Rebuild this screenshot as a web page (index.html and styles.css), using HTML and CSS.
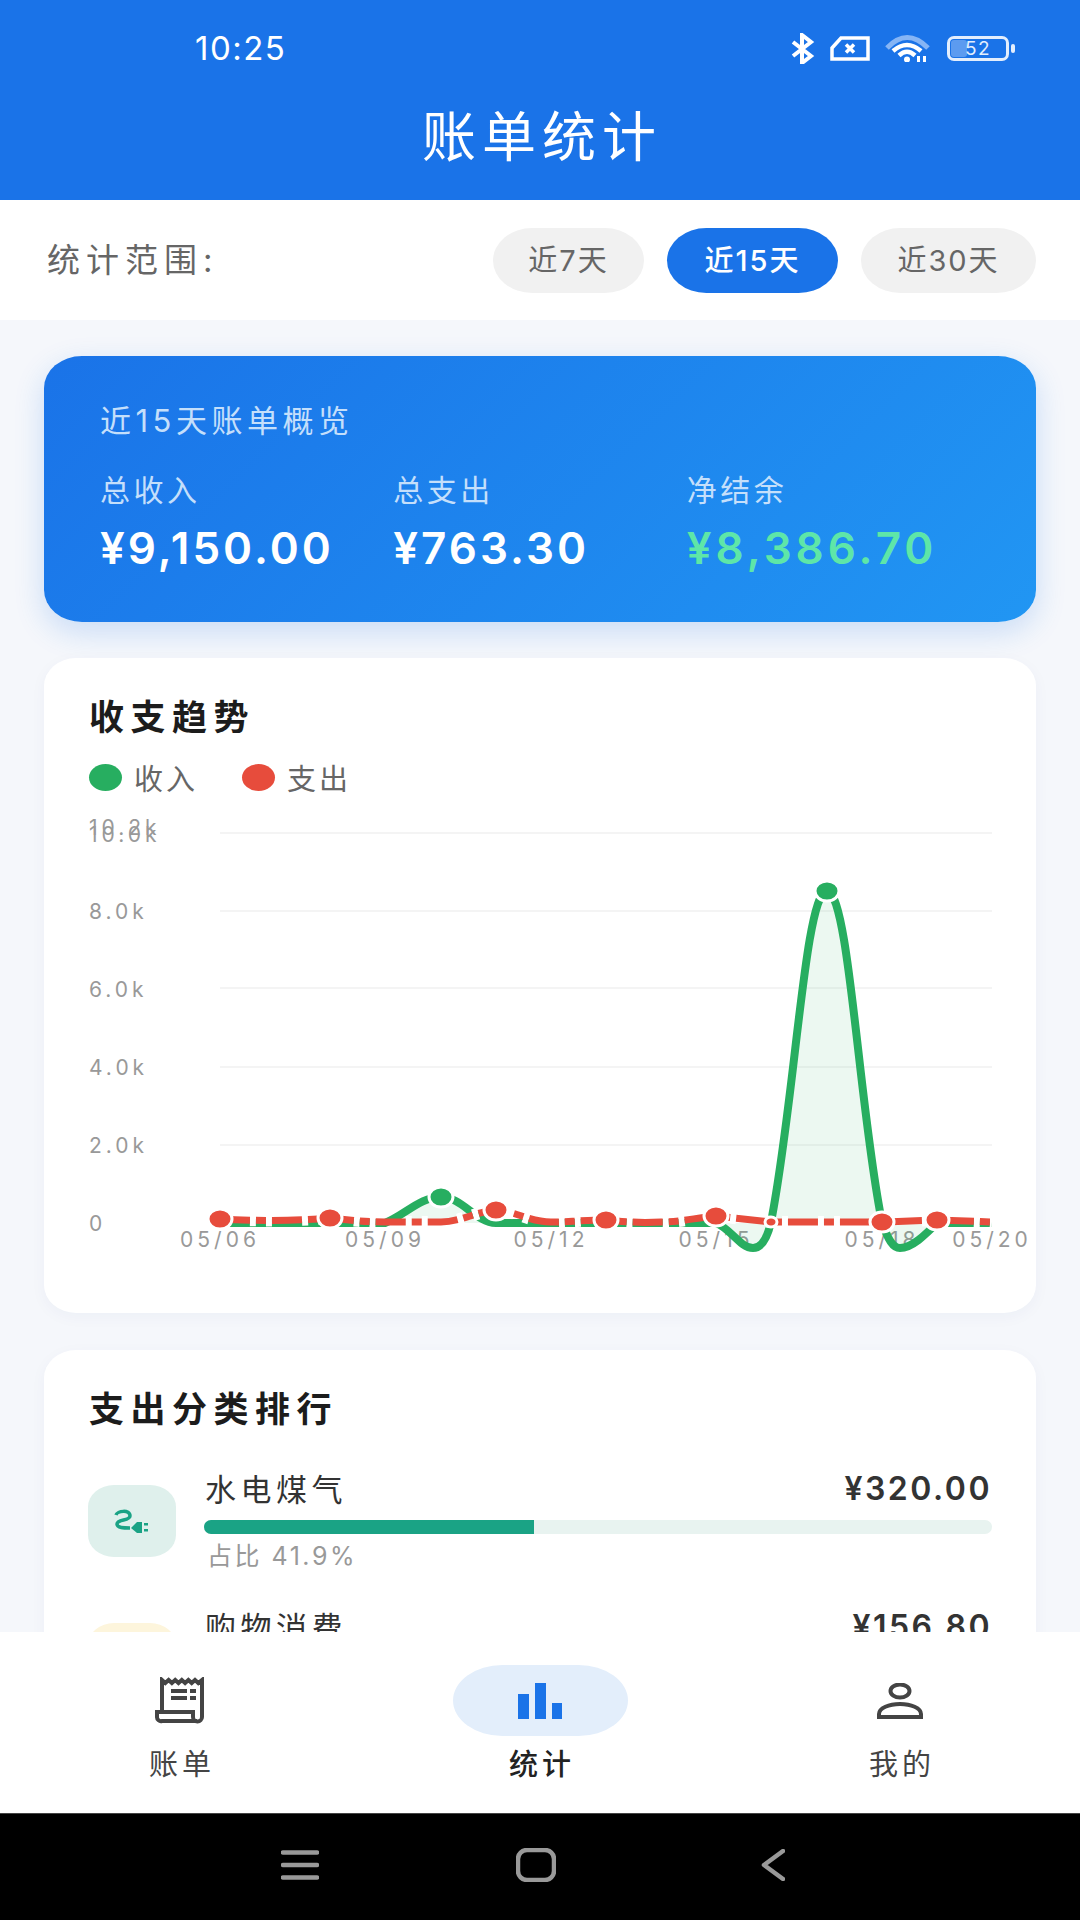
FILE: index.html
```html
<!DOCTYPE html>
<html lang="zh-CN">
<head>
    <meta charset="UTF-8">
    <meta name="viewport" content="width=device-width, initial-scale=1.0">
    <title>账单统计</title>
    <link rel="stylesheet" href="styles.css">
</head>
<body>

<header class="header">
    <div class="status-bar">
        <span class="status-time">10:25</span>
        <div class="status-icons">
            <svg class="icon-bt" viewBox="0 0 25 31"><path d="M3 9L21 23L12 30V2L21 9L3 23"/></svg>
            <svg class="icon-sim" viewBox="0 0 40 25"><path d="M2 12L11 2H38V23H2Z"/><path d="M16 8.500l8 8m0-8l-8 8"/></svg>
            <svg class="icon-wifi" viewBox="0 0 45 28">
                <path class="faded" d="M2 14Q22-7 43 14"/>
                <path d="M8 17Q22 5 36 17"/>
                <path d="M14 21.500Q22 14 30 21.500"/>
                <circle class="solid" cx="22" cy="25.500" r="3"/>
                <rect class="solid" x="32" y="22" width="3" height="6"/>
                <rect class="solid" x="38" y="22" width="3" height="6"/>
            </svg>
            <div class="battery">
                <div class="battery-body"><div class="battery-level"></div><span class="battery-text">52</span></div>
                <div class="battery-nub"></div>
            </div>
        </div>
    </div>
    <h1 class="page-title">账单统计</h1>
</header>

<div class="filter-bar">
    <span class="filter-label">统计范围:</span>
    <div class="filter-pills">
        <button class="pill pill-7">近7天</button>
        <button class="pill pill-15 active">近15天</button>
        <button class="pill pill-30">近30天</button>
    </div>
</div>

<main class="content">
    <section class="summary">
        <div class="summary-title">近15天账单概览</div>
        <div class="summary-grid">
            <div>
                <div class="summary-label">总收入</div>
                <div class="summary-value">¥9,150.00</div>
            </div>
            <div>
                <div class="summary-label">总支出</div>
                <div class="summary-value">¥763.30</div>
            </div>
            <div>
                <div class="summary-label">净结余</div>
                <div class="summary-value net">¥8,386.70</div>
            </div>
        </div>
    </section>

    <section class="card chart-card">
        <h2 class="card-title">收支趋势</h2>
        <div class="legend">
            <span class="legend-item"><i class="dot income"></i>收入</span>
            <span class="legend-item"><i class="dot expense"></i>支出</span>
        </div>
        <svg class="chart" viewBox="44 810 992 503">
            <g class="grid">
                <path d="M220 833H992"/>
                <path d="M220 911H992"/>
                <path d="M220 988H992"/>
                <path d="M220 1067H992"/>
                <path d="M220 1145H992"/>
            </g>
            <g class="y-labels">
                <text x="89" y="835">10.2k</text>
                <text x="89" y="842">10.0k</text>
                <text x="89" y="919">8.0k</text>
                <text x="89" y="997">6.0k</text>
                <text x="89" y="1075">4.0k</text>
                <text x="89" y="1153">2.0k</text>
                <text x="89" y="1231">0</text>
            </g>
            <g class="x-labels">
                <text x="220" y="1247">05/06</text>
                <text x="385" y="1247">05/09</text>
                <text x="551" y="1247">05/12</text>
                <text x="716" y="1247">05/15</text>
                <text x="882" y="1247">05/18</text>
                <text x="992" y="1247">05/20</text>
            </g>
            <path class="income-area" d="M220 1223H385C405 1215 420 1197 441 1197C462 1197 475 1222 496 1223H716C730 1228 740 1248 753 1248C763 1248 768 1235 771 1222C795 1100 805 891 827 891C849 891 859 1110 882 1222C888 1240 893 1248 900 1248C912 1248 925 1235 937 1223H992Z"/>
            <path class="income-line" d="M220 1223H385C405 1215 420 1197 441 1197C462 1197 475 1222 496 1223H716C730 1228 740 1248 753 1248C763 1248 768 1235 771 1222C795 1100 805 891 827 891C849 891 859 1110 882 1222C888 1240 893 1248 900 1248C912 1248 925 1235 937 1223H992"/>
            <!-- white goes in the gaps of the dashes so the green is cut there too -->
            <path class="expense-gaps" d="M220 1219C256 1221 294 1221 330 1218C350 1220 365 1222 385 1222H441C460 1222 475 1212 496 1210C515 1211 530 1222 551 1222C570 1222 585 1220 606 1220C625 1222 640 1223 661 1222C680 1222 695 1218 716 1216L771 1222H882L937 1220L992 1222"/>
            <path class="expense-line" d="M220 1219C256 1221 294 1221 330 1218C350 1220 365 1222 385 1222H441C460 1222 475 1212 496 1210C515 1211 530 1222 551 1222C570 1222 585 1220 606 1220C625 1222 640 1223 661 1222C680 1222 695 1218 716 1216L771 1222H882L937 1220L992 1222"/>
            <g class="income-dots">
                <ellipse cx="441" cy="1197" rx="12" ry="10"/>
                <ellipse cx="827" cy="891" rx="12" ry="10"/>
            </g>
            <g class="expense-dots">
                <ellipse cx="220" cy="1219" rx="12" ry="10"/>
                <ellipse cx="330" cy="1218" rx="12" ry="10"/>
                <ellipse cx="496" cy="1210" rx="12" ry="10"/>
                <ellipse cx="606" cy="1220" rx="12" ry="10"/>
                <ellipse cx="716" cy="1216" rx="12" ry="10"/>
                <ellipse cx="771" cy="1222" rx="6" ry="5"/>
                <ellipse cx="882" cy="1222" rx="12" ry="10"/>
                <ellipse cx="937" cy="1220" rx="12" ry="10"/>
            </g>
        </svg>
    </section>

    <section class="card rank-card">
        <h2 class="card-title">支出分类排行</h2>
        <div class="rank-item">
            <div class="rank-icon utilities">
                <svg viewBox="0 0 40 30">
                    <path class="plug-wire" d="M4 9C5 5 18 3 18 10C18 15 5 13 5 18C5 22 12 22 18 22"/>
                    <path d="M19 22L25 16H30V27H25Z"/>
                    <rect x="32" y="17" width="4" height="2.500"/>
                    <rect x="32" y="23" width="4" height="2.500"/>
                </svg>
            </div>
            <div class="rank-body">
                <div class="rank-head"><span class="rank-name">水电煤气</span><span class="rank-amount">¥320.00</span></div>
                <div class="rank-track"><div class="rank-fill" style="width: 41.9%"></div></div>
                <div class="rank-share">占比 41.9%</div>
            </div>
        </div>
        <div class="rank-item">
            <div class="rank-icon shopping"></div>
            <div class="rank-body">
                <div class="rank-head"><span class="rank-name">购物消费</span><span class="rank-amount">¥156.80</span></div>
                <div class="rank-track"><div class="rank-fill" style="width: 20.5%"></div></div>
                <div class="rank-share">占比 20.5%</div>
            </div>
        </div>
    </section>
</main>

<nav class="tabbar">
    <a class="tab">
        <span class="tab-icon">
            <svg class="icon-receipt" viewBox="0 0 52 48"><path d="M8 35V3l3.300 3 3.300-3 3.300 3 3.300-3 3.300 3 3.300-3 3.300 3 3.300-3 3.300 3 3.300-3 3.300 3L48 3v37a4 4 0 0 1-9 0v-5H3v5a4 4 0 0 0 5 4h35"/><path d="M17 14H33M36 14H42M17 21H33M36 21H42"/></svg>
        </span>
        <span class="tab-label">账单</span>
    </a>
    <a class="tab active">
        <span class="tab-icon">
            <svg class="icon-bars" viewBox="0 0 44 36"><rect x="0" y="11" width="11" height="25"/><rect x="17" y="0" width="11" height="36"/><rect x="34" y="20" width="10" height="16"/></svg>
        </span>
        <span class="tab-label">统计</span>
    </a>
    <a class="tab">
        <span class="tab-icon">
            <svg class="icon-person" viewBox="0 0 46 36"><ellipse cx="23" cy="8" rx="9.500" ry="6.500"/><path d="M2 34V31C2 25 12 21 23 21S44 25 44 31V34Z"/></svg>
        </span>
        <span class="tab-label">我的</span>
    </a>
</nav>

<div class="system-nav">
    <svg class="nav-menu" viewBox="0 0 38 30"><path d="M2 2.500H36M2 15H36M2 27.500H36"/></svg>
    <svg class="nav-home" viewBox="0 0 40 34"><rect x="2" y="2" width="36" height="30" rx="9"/></svg>
    <svg class="nav-back" viewBox="0 0 24 32"><path d="M22 2L3 16L22 30"/></svg>
</div>

</body>
</html>
```

FILE: styles.css
```css
* {
    box-sizing: border-box;
    margin: 0;
    padding: 0;
}

body {
    width: 1080px;
    height: 1920px;
    display: flex;
    flex-direction: column;
    overflow: hidden;
    font-family: Inter, "Noto Sans CJK SC", sans-serif;
    background-color: #f5f7fb;
}

/* header */
.header {
    height: 200px;
    flex-shrink: 0;
    background-color: #1a73e8;
    color: #fff;
}

.status-bar {
    height: 96px;
    display: flex;
    align-items: center;
    justify-content: space-between;
    padding: 0 65px 0 195px;
}

.status-time {
    font-size: 33px;
    letter-spacing: 1.500px;
}

.status-icons {
    display: flex;
    align-items: center;
    gap: 15px;
}

.status-icons svg {
    display: block;
    fill: none;
    stroke: #fff;
}

.icon-bt {
    width: 25px;
    height: 31px;
    stroke-width: 4;
}

.icon-sim {
    width: 40px;
    height: 25px;
    stroke-width: 3.500;
}

.icon-wifi {
    width: 45px;
    height: 28px;
    stroke-width: 4.500;
    margin-right: 2px;
}

.icon-wifi .faded {
    stroke: #86b5f5;
    stroke-width: 5;
}

.icon-wifi .solid {
    fill: #fff;
    stroke: none;
}

.battery {
    display: flex;
    align-items: center;
    gap: 2px;
}

.battery-body {
    position: relative;
    width: 62px;
    height: 25px;
    border: 3px solid #e3eefd;
    border-radius: 7px;
    text-align: center;
}

.battery-level {
    position: absolute;
    left: 1px;
    top: 1px;
    bottom: 1px;
    width: 16px;
    border-radius: 3px;
    background-color: #5c9bf0;
}

.battery-text {
    position: relative;
    display: block;
    font-size: 19px;
    line-height: 19px;
    letter-spacing: 1.500px;
    color: #e3eefd;
}

.battery-nub {
    width: 4px;
    height: 9px;
    border-radius: 2px;
    background-color: #e3eefd;
}

.page-title {
    padding-left: 4px;
    font-size: 54px;
    font-weight: 400;
    line-height: 84px;
    letter-spacing: 6px;
    text-align: center;
}

/* range filter */
.filter-bar {
    height: 120px;
    flex-shrink: 0;
    display: flex;
    align-items: center;
    justify-content: space-between;
    padding: 0 44px 0 47px;
    background-color: #fff;
}

.filter-label {
    margin-bottom: 5px;
    font-size: 33px;
    letter-spacing: 6px;
    color: #666;
}

.filter-pills {
    display: flex;
    gap: 23px;
}

.pill {
    height: 65px;
    padding-bottom: 4px;
    border: none;
    border-radius: 40px / 33px;
    font-family: inherit;
    font-size: 29px;
    letter-spacing: 2px;
    color: #666;
    background-color: #f1f1f1;
}

.pill-7 {
    width: 151px;
}

.pill-15 {
    width: 171px;
}

.pill-30 {
    width: 175px;
}

.pill.active {
    font-weight: 500;
    color: #fff;
    background-color: #1a73e8;
}

/* scrolling area, clipped by the tab bar */
.content {
    flex: 1;
    min-height: 0;
    overflow: hidden;
    padding: 36px 44px 0;
}

.summary {
    height: 266px;
    padding: 44px 56px 0;
    border-radius: 38px / 32px;
    color: #fff;
    background: linear-gradient(135deg, #1a73e8, #2196f3);
    box-shadow: 0 10px 30px rgba(26, 115, 232, 0.2);
}

.summary-title {
    font-size: 31px;
    line-height: 42px;
    letter-spacing: 4.500px;
    color: #c4dffb;
}

.summary-grid {
    display: grid;
    grid-template-columns: repeat(3, 1fr);
    margin-top: 28px;
}

.summary-label {
    font-size: 30px;
    line-height: 40px;
    letter-spacing: 3.500px;
    color: #c4dffb;
}

.summary-value {
    margin-top: 13px;
    font-size: 44px;
    font-weight: 600;
    line-height: 50px;
    letter-spacing: 3px;
}

.summary-value.net {
    letter-spacing: 4px;
    color: #5ee6a8;
}

.card {
    margin-top: 36px;
    border-radius: 32px / 28px;
    background-color: #fff;
    box-shadow: 0 4px 16px rgba(30, 60, 120, 0.04);
}

.card-title {
    font-size: 35px;
    font-weight: 700;
    line-height: 46px;
    letter-spacing: 6.500px;
    color: #1c1c1c;
}

/* trend chart */
.chart-card {
    height: 655px;
    padding-top: 36px;
}

.chart-card .card-title {
    padding-left: 45px;
}

.legend {
    display: flex;
    gap: 44px;
    height: 36px;
    margin-top: 19px;
    padding-left: 45px;
}

.legend-item {
    display: flex;
    align-items: center;
    gap: 12px;
    font-size: 29px;
    letter-spacing: 3px;
    color: #666;
}

.dot {
    width: 33px;
    height: 27px;
    border-radius: 50%;
}

.dot.income {
    background-color: #27ae60;
}

.dot.expense {
    background-color: #e74c3c;
}

.chart {
    display: block;
    width: 992px;
    height: 503px;
    margin-top: 15px;
}

.grid path {
    fill: none;
    stroke: #f4f4f4;
    stroke-width: 2;
}

.y-labels text,
.x-labels text {
    font-size: 21px;
    letter-spacing: 4px;
    fill: #999;
}

.x-labels text {
    text-anchor: middle;
}

.income-area {
    fill: rgba(39, 174, 96, 0.09);
}

.income-line {
    fill: none;
    stroke: #27ae60;
    stroke-width: 8;
}

.expense-line {
    fill: none;
    stroke: #e74c3c;
    stroke-width: 7;
    stroke-dasharray: 30 6 10 6;
}

.expense-gaps {
    fill: none;
    stroke: #fff;
    stroke-width: 12;
    stroke-dasharray: 6 10 6 30;
    stroke-dashoffset: -30;
}

.income-dots ellipse {
    fill: #27ae60;
    stroke: #fff;
    stroke-width: 3;
}

.expense-dots ellipse {
    fill: #e74c3c;
    stroke: #fff;
    stroke-width: 3;
}

/* category ranking */
.rank-card {
    margin-top: 37px;
    padding: 36px 44px 40px;
}

.rank-card .card-title {
    padding-left: 1px;
    margin-bottom: 38px;
}

.rank-item {
    display: flex;
    align-items: center;
    gap: 28px;
    margin-bottom: 37px;
}

.rank-icon {
    width: 88px;
    height: 72px;
    flex-shrink: 0;
    display: flex;
    align-items: center;
    justify-content: center;
    border-radius: 26px / 22px;
}

.rank-icon.utilities {
    background-color: #dff0ec;
}

.rank-icon.shopping {
    background-color: #fdf5dc;
}

.rank-icon svg {
    width: 40px;
    height: 30px;
    fill: #1aa385;
}

.plug-wire {
    fill: none;
    stroke: #1aa385;
    stroke-width: 3.500;
}

.rank-body {
    flex: 1;
    min-width: 0;
}

.rank-head {
    display: flex;
    align-items: center;
    justify-content: space-between;
    height: 36px;
    padding-left: 1px;
}

.rank-name {
    margin-bottom: 2px;
    font-size: 31px;
    letter-spacing: 4.500px;
    color: #333;
}

.rank-amount {
    font-size: 32px;
    font-weight: 600;
    letter-spacing: 2.500px;
    color: #333;
}

.rank-track {
    height: 14px;
    margin-top: 14px;
    border-radius: 7px;
    background-color: #e8f3f0;
}

.rank-fill {
    height: 100%;
    border-radius: 7px 0 0 7px;
    background-color: #1aa385;
}

.rank-share {
    margin-top: 7px;
    padding-left: 3px;
    font-size: 25px;
    line-height: 30px;
    letter-spacing: 2.500px;
    color: #999;
}

/* bottom tabs */
.tabbar {
    height: 181px;
    flex-shrink: 0;
    display: flex;
    background-color: #fff;
}

.tab {
    flex: 1;
    display: flex;
    flex-direction: column;
    align-items: center;
    padding-top: 33px;
}

.tab-icon {
    width: 175px;
    height: 71px;
    display: flex;
    align-items: center;
    justify-content: center;
    border-radius: 50px / 36px;
}

.tab.active .tab-icon {
    background-color: #e3eefb;
}

.tab-label {
    margin-top: 9px;
    padding-left: 4px;
    font-size: 29px;
    line-height: 40px;
    letter-spacing: 4px;
    color: #444;
}

.tab.active .tab-label {
    font-weight: 500;
    color: #222;
}

.icon-receipt {
    width: 52px;
    height: 48px;
    fill: none;
    stroke: #444;
    stroke-width: 4;
}

.icon-bars {
    width: 44px;
    height: 36px;
    fill: #1a73e8;
}

.icon-person {
    width: 46px;
    height: 36px;
    fill: none;
    stroke: #444;
    stroke-width: 4;
}

/* android nav */
.system-nav {
    height: 107px;
    flex-shrink: 0;
    display: flex;
    align-items: center;
    padding: 0 0 5px 281px;
    background-color: #000;
    border-top: 1px solid #444;
}

.system-nav svg {
    display: block;
    fill: none;
    stroke: #999;
    stroke-linecap: round;
    stroke-linejoin: round;
    stroke-width: 4.500;
}

.nav-menu {
    width: 38px;
    height: 30px;
    margin-right: 197px;
}

.nav-home {
    width: 40px;
    height: 34px;
    margin-right: 205px;
}

.nav-back {
    width: 24px;
    height: 32px;
}
```
